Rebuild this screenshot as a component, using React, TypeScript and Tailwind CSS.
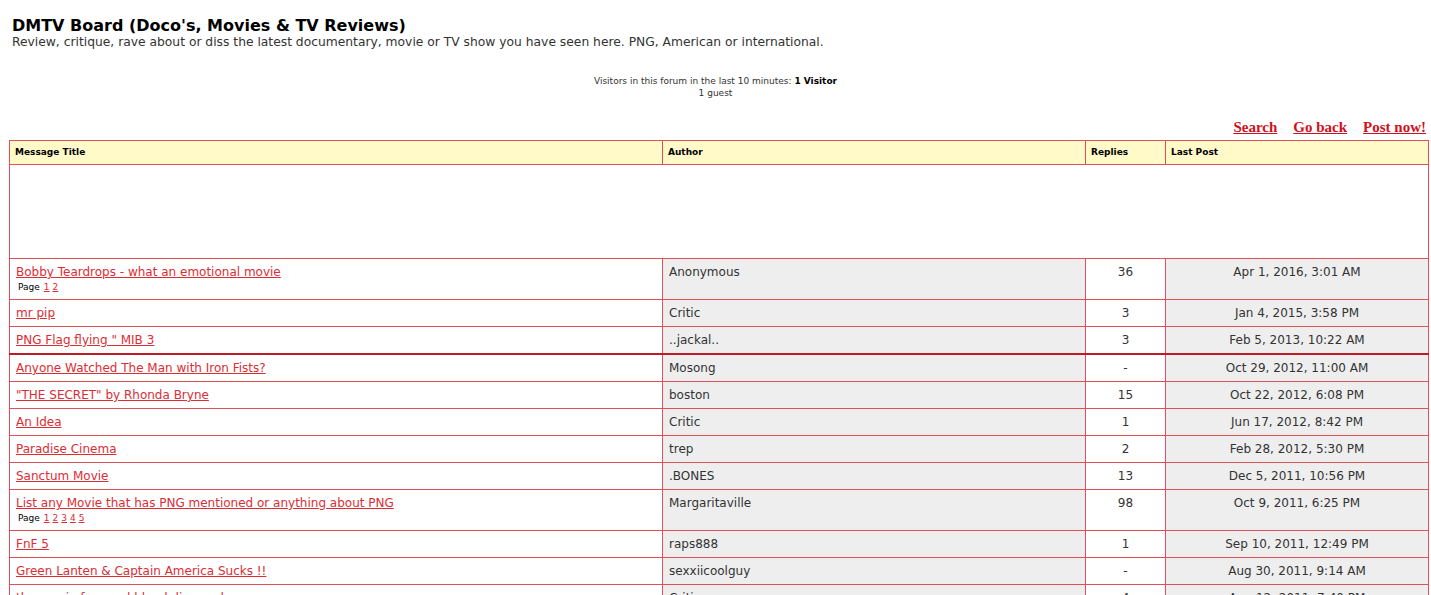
const topics = [
  { title: "Bobby Teardrops - what an emotional movie", author: "Anonymous", replies: "36", last: "Apr 1, 2016, 3:01 AM", pages: 2 },
  { title: "mr pip", author: "Critic", replies: "3", last: "Jan 4, 2015, 3:58 PM" },
  { title: "PNG Flag flying \" MIB 3", author: "..jackal..", replies: "3", last: "Feb 5, 2013, 10:22 AM", sticky: true },
  { title: "Anyone Watched The Man with Iron Fists?", author: "Mosong", replies: "-", last: "Oct 29, 2012, 11:00 AM" },
  { title: "\"THE SECRET\" by Rhonda Bryne", author: "boston", replies: "15", last: "Oct 22, 2012, 6:08 PM" },
  { title: "An Idea", author: "Critic", replies: "1", last: "Jun 17, 2012, 8:42 PM" },
  { title: "Paradise Cinema", author: "trep", replies: "2", last: "Feb 28, 2012, 5:30 PM" },
  { title: "Sanctum Movie", author: ".BONES", replies: "13", last: "Dec 5, 2011, 10:56 PM" },
  { title: "List any Movie that has PNG mentioned or anything about PNG", author: "Margaritaville", replies: "98", last: "Oct 9, 2011, 6:25 PM", pages: 5 },
  { title: "FnF 5", author: "raps888", replies: "1", last: "Sep 10, 2011, 12:49 PM" },
  { title: "Green Lanten & Captain America Sucks !!", author: "sexxiicoolguy", replies: "-", last: "Aug 30, 2011, 9:14 AM" },
  { title: "the movie fury and blood diamond", author: "Critic", replies: "4", last: "Aug 12, 2011, 7:40 PM" },
];

const App = () => {
  return (
    <div className="min-h-screen bg-white text-[#222] font-['DejaVu_Sans','Verdana',sans-serif] px-[9px] pt-[16px]">
      <div className="px-[3px]">
        <h1 className="text-[16px] font-bold leading-[19px] text-black">
          DMTV Board (Doco's, Movies &amp; TV Reviews)
        </h1>
        <p className="text-[12.3px] leading-[15px] text-[#333]">
          Review, critique, rave about or diss the latest documentary, movie or TV show you have seen here. PNG, American or international.
        </p>
      </div>

      <div className="mt-[25px] text-center text-[9px] leading-[12px] text-[#333]">
        <div>
          Visitors in this forum in the last 10 minutes: <b className="text-black">1 Visitor</b>
        </div>
        <div>1 guest</div>
      </div>

      <div className="mt-[20px] -mr-[4px] flex justify-end gap-[16px] text-[15px] font-bold leading-[17px] font-['Liberation_Serif','Times_New_Roman',serif]">
        <a href="#" className="text-[#d01020] underline">Search</a>
        <a href="#" className="text-[#d01020] underline">Go back</a>
        <a href="#" className="text-[#d01020] underline">Post now!</a>
      </div>

      <table className="mt-[4px] w-[1420px] border-collapse border border-[#e0404a] text-[12px] leading-[16px]">
        <thead>
          <tr className="bg-[#fffac8] text-[9px] font-bold text-black">
            <th className="w-[653px] border border-[#e0505a] px-[5px] py-[5px] leading-[13px] text-left">Message Title</th>
            <th className="w-[423px] border border-[#e0505a] px-[5px] py-[5px] leading-[13px] text-left">Author</th>
            <th className="w-[80px] border border-[#e0505a] px-[5px] py-[5px] leading-[13px] text-left">Replies</th>
            <th className="border border-[#e0505a] px-[5px] py-[5px] leading-[13px] text-left">Last Post</th>
          </tr>
        </thead>
        <tbody>
          <tr>
            <td colSpan={4} className="h-[94px] border border-[#e0505a]"></td>
          </tr>
          {topics.map((t) => (
            <tr key={t.title} className={t.sticky ? "border-b-2 border-b-[#c01a26]" : ""}>
              <td className="border border-[#e0505a] px-[6px] py-[5px] align-top">
                <a href="#" className="text-[#dc2c34] underline">{t.title}</a>
                {t.pages && (
                  <div className="flex gap-[3px] pl-[2px] pt-[1px] text-[9px] leading-[13px] text-black">
                    <span className="mr-[1px]">Page</span>
                    {Array.from({ length: t.pages }, (_, i) => (
                      <a key={i} href="#" className="text-[#dc2c34] underline">{i + 1}</a>
                    ))}
                  </div>
                )}
              </td>
              <td className="border border-[#e0505a] bg-[#eeeeee] px-[6px] py-[5px] align-top text-[#333]">{t.author}</td>
              <td className="border border-[#e0505a] px-[6px] py-[5px] text-center align-top text-[#333]">{t.replies}</td>
              <td className="border border-[#e0505a] bg-[#eeeeee] px-[6px] py-[5px] text-center align-top text-[#333]">{t.last}</td>
            </tr>
          ))}
        </tbody>
      </table>
    </div>
  );
};

export default App;
